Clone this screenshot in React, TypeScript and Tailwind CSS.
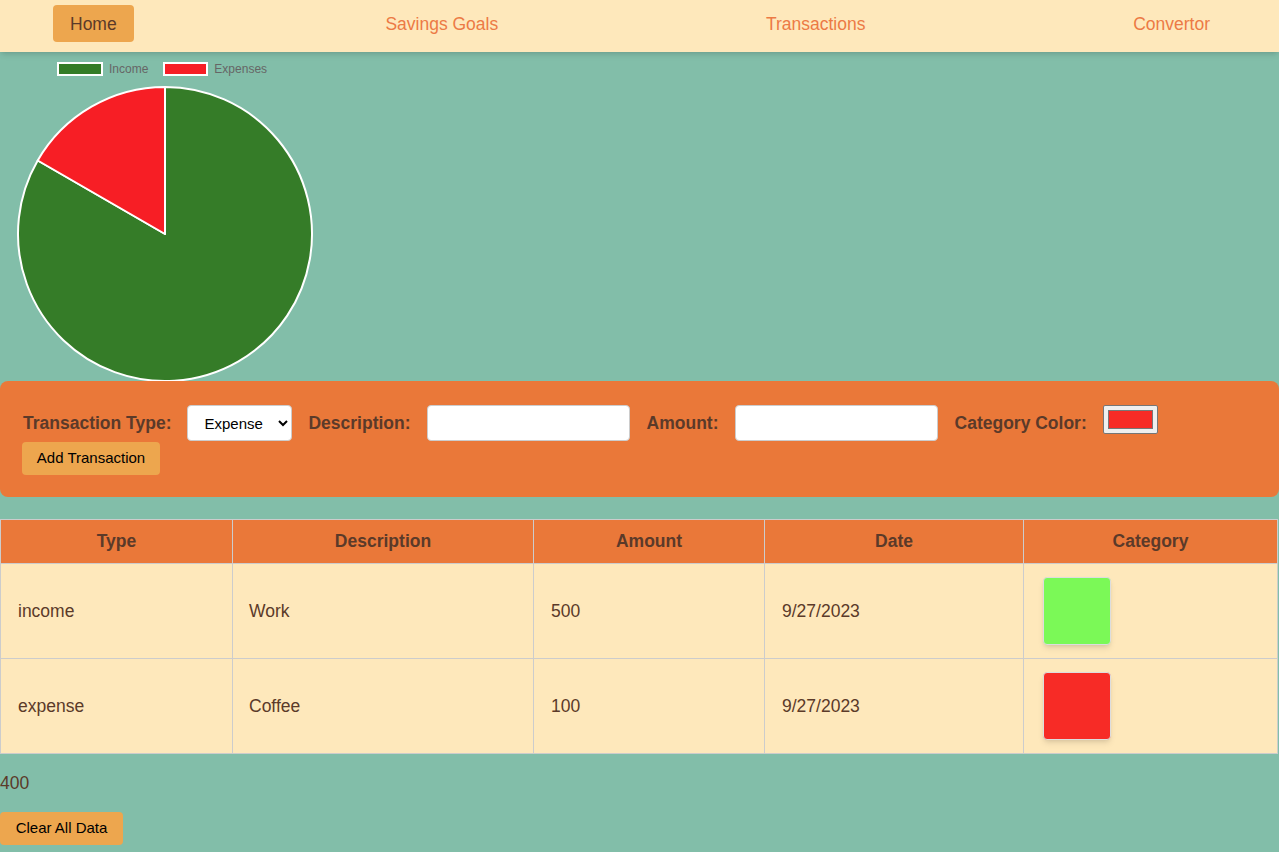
import React from 'react';

const rows = [
  { type: 'income', description: 'Work', amount: 500, date: '9/27/2023', color: 'bg-[#7bf957]' },
  { type: 'expense', description: 'Coffee', amount: 100, date: '9/27/2023', color: 'bg-[#f72b26]' },
];

function PieChart() {
  // income 500 / expense 100 -> expense slice is 60deg, drawn last (counter-clockwise from top)
  return (
    <div className="h-[329px] pl-[15px] pt-[10px]">
      <div className="flex items-center h-[14px] ml-[42px] gap-[6px] text-[12px] text-[#666]">
        <span className="w-[46px] h-[14px] border-2 border-white bg-[#347c27]" />
        <span className="mr-[9px]">Income</span>
        <span className="w-[45px] h-[14px] border-2 border-white bg-[#f71e25]" />
        <span>Expenses</span>
      </div>
      <svg width="300" height="300" viewBox="0 0 300 300" className="block mt-[8px] overflow-visible">
        <path d="M150 150 L150 3 A147 147 0 1 1 22.7 76.5 Z" fill="#357c28" stroke="#fff" strokeWidth="2" strokeLinejoin="round" />
        <path d="M150 150 L22.7 76.5 A147 147 0 0 1 150 3 Z" fill="#f71e25" stroke="#fff" strokeWidth="2" strokeLinejoin="round" />
      </svg>
    </div>
  );
}

export default function App() {
  const navLinks = ['Savings Goals', 'Transactions', 'Convertor'];
  return (
    <div className="min-h-screen bg-[#82bea9] font-['Liberation_Sans',Arial,sans-serif] text-[#5b3a29]">
      {/* Top nav */}
      <nav className="relative z-10 h-[52px] bg-[#fee8bb] shadow-md flex justify-between items-start px-[53px] pt-[5px]">
        <a className="px-[17px] pt-[9px] pb-[7px] leading-[21px] text-[17.5px] rounded bg-[#eda64e] text-[#5b3a29]">Home</a>
        {navLinks.map((l) => (
          <a key={l} className="px-4 pt-[9px] pb-[7px] leading-[21px] text-[17.5px] text-[#ec7a45]">
            {l}
          </a>
        ))}
      </nav>

      <PieChart />

      {/* Transaction form */}
      <form className="relative bg-[#ea7839] rounded-lg pl-[22px] pr-6 pt-[24px] pb-[22px]">
        <div className="flex items-center gap-4 text-[17.5px] font-bold text-[#5b3a29]">
          <label className="ml-[1px]">Transaction Type:</label>
          <select className="w-[105px] h-[36px] bg-white border border-[#ccc] rounded pl-[12px] text-[15px] font-normal text-black">
            <option>Expense</option>
            <option>Income</option>
          </select>
          <label>Description:</label>
          <input className="w-[203px] h-[36px] bg-white border border-[#ccc] rounded" />
          <label className="ml-[1px]">Amount:</label>
          <input className="w-[203px] h-[36px] bg-white border border-[#ccc] rounded" />
          <label className="ml-[1px]">Category Color:</label>
          <div className="w-[55px] h-[29px] -mt-[7px] bg-[#efefef] border border-[#767676] rounded-[2px] p-[4px]">
            <div className="w-full h-full bg-[#f72b26] border border-[#777]" />
          </div>
        </div>
        <button type="button" className="mt-[1px] h-[33px] w-[138px] rounded bg-[#eda64e] text-[15px] text-black">
          Add Transaction
        </button>
      </form>

      {/* Transactions table */}
      <table className="mt-[22px] w-[1278px] border-collapse text-[17.5px]">
        <thead>
          <tr className="h-[44px] bg-[#ea7839] font-bold">
            <th className="w-[232px] border border-[#ccc]">Type</th>
            <th className="w-[301px] border border-[#ccc]">Description</th>
            <th className="w-[231px] border border-[#ccc]">Amount</th>
            <th className="w-[259px] border border-[#ccc]">Date</th>
            <th className="border border-[#ccc]">Category</th>
          </tr>
        </thead>
        <tbody className="bg-[#fee8bb]">
          {rows.map((r) => (
            <tr key={r.description} className="h-[95px]">
              <td className="border border-[#ccc] pl-[17px]">{r.type}</td>
              <td className="border border-[#ccc] pl-[16px]">{r.description}</td>
              <td className="border border-[#ccc] pl-[17px]">{r.amount}</td>
              <td className="border border-[#ccc] pl-[17px]">{r.date}</td>
              <td className="border border-[#ccc] pl-[19px]">
                <div className={`w-[68px] h-[68px] rounded-[4px] border border-[#ddd] shadow-md ${r.color}`} />
              </td>
            </tr>
          ))}
        </tbody>
      </table>

      <div className="mt-[18px] text-[17.5px] leading-[22px]">400</div>
      <button type="button" className="mt-[18px] h-[33px] w-[123px] rounded bg-[#eda64e] text-[15px] text-black">
        Clear All Data
      </button>
    </div>
  );
}
